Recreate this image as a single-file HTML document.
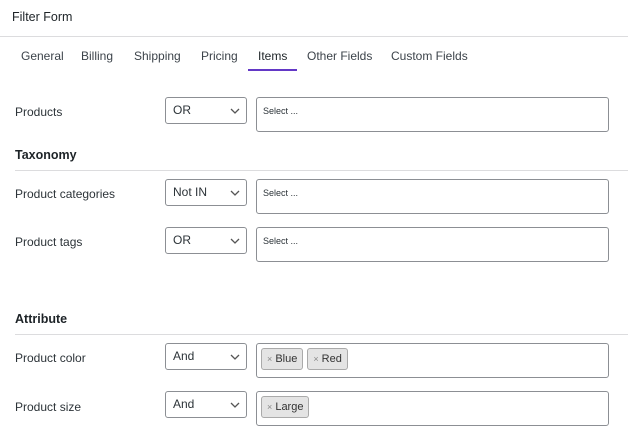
<!DOCTYPE html><html><head><style>
body{margin:0;width:628px;height:448px;background:#fff;font-family:"Liberation Sans",sans-serif;color:#1e1e1e;position:relative;overflow:hidden}
.a{position:absolute;white-space:nowrap}
.t{font-size:12px;color:#3c434a}
.lbl{font-size:12px;color:#2c3338}
.h{font-size:12.5px;font-weight:bold;color:#1d2327}
.sel{position:absolute;left:165px;width:82px;height:27px;border:1px solid #8c8f94;border-radius:3px;box-sizing:border-box;font-size:12px;padding:5px 7px;color:#2c3338}
.sel svg{position:absolute;right:6px;top:10px}
.in{position:absolute;left:256px;width:353px;height:35px;border:1px solid #8c8f94;border-radius:3px;box-sizing:border-box;font-size:9px;padding:8px 6px;color:#2c3338}
.tag{display:inline-block;height:22px;line-height:21px;background:#e4e4e4;border:1px solid #aaa;border-radius:3px;font-size:11px;padding:0 5px;margin-right:4px;box-sizing:border-box;color:#333}
.tag i{font-style:normal;color:#888;font-size:9px}
.hr{position:absolute;height:1px;background:#dcdcde}
</style></head><body>
<div class="a" style="left:12px;top:10px;font-size:12.5px;color:#1d2327">Filter Form</div>
<div class="hr" style="left:0;right:0;top:36px"></div>
<div class="a t" style="left:21px;top:49px">General</div>
<div class="a t" style="left:81px;top:49px">Billing</div>
<div class="a t" style="left:134px;top:49px">Shipping</div>
<div class="a t" style="left:201px;top:49px">Pricing</div>
<div class="a t" style="left:258px;top:49px;color:#1d2327">Items</div>
<div class="a" style="left:248px;top:69px;width:49px;height:2px;background:#6338c6"></div>
<div class="a t" style="left:307px;top:49px">Other Fields</div>
<div class="a t" style="left:391px;top:49px">Custom Fields</div>

<div class="a lbl" style="left:15px;top:105px">Products</div>
<div class="sel" style="top:97px">OR<svg width="10" height="6"><path d="M1 1l4 4 4-4" stroke="#555" fill="none" stroke-width="1.3"/></svg></div>
<div class="in" style="top:97px">Select ...</div>

<div class="a h" style="left:15px;top:148px">Taxonomy</div>
<div class="hr" style="left:15px;right:0;top:170px"></div>
<div class="a lbl" style="left:15px;top:187px">Product categories</div>
<div class="sel" style="top:179px">Not IN<svg width="10" height="6"><path d="M1 1l4 4 4-4" stroke="#555" fill="none" stroke-width="1.3"/></svg></div>
<div class="in" style="top:179px">Select ...</div>
<div class="a lbl" style="left:15px;top:235px">Product tags</div>
<div class="sel" style="top:227px">OR<svg width="10" height="6"><path d="M1 1l4 4 4-4" stroke="#555" fill="none" stroke-width="1.3"/></svg></div>
<div class="in" style="top:227px">Select ...</div>

<div class="a h" style="left:15px;top:312px">Attribute</div>
<div class="hr" style="left:15px;right:0;top:334px"></div>
<div class="a lbl" style="left:15px;top:351px">Product color</div>
<div class="sel" style="top:343px">And<svg width="10" height="6"><path d="M1 1l4 4 4-4" stroke="#555" fill="none" stroke-width="1.3"/></svg></div>
<div class="in" style="top:343px;padding:4px 4px"><span class="tag"><i>×</i> Blue</span><span class="tag"><i>×</i> Red</span></div>
<div class="a lbl" style="left:15px;top:400px">Product size</div>
<div class="sel" style="top:391px">And<svg width="10" height="6"><path d="M1 1l4 4 4-4" stroke="#555" fill="none" stroke-width="1.3"/></svg></div>
<div class="in" style="top:391px;padding:4px 4px"><span class="tag"><i>×</i> Large</span></div>
</body></html>
